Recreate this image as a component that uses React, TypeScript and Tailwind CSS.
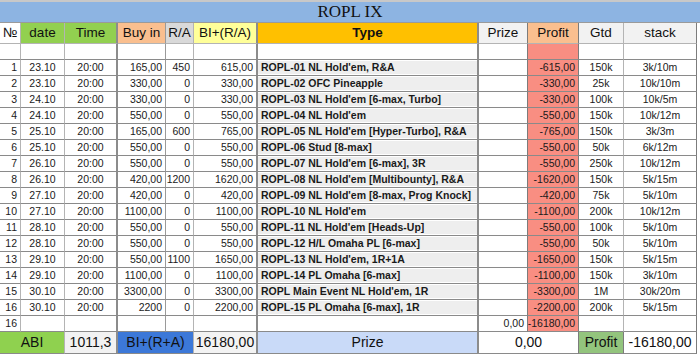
import React from "react"

const grid = "grid grid-cols-[21px_44px_53px_48px_28px_64px_221px_49px_51px_45px_73px]"

// right border of each column, as the sheet draws it
const rb = [
  "border-r border-r-[#b4b4b4]",
  "border-r border-r-[#b4b4b4]",
  "border-r-2 border-r-[#8c8c8c]",
  "border-r border-r-[#9a9a9a]",
  "border-r border-r-[#b4b4b4]",
  "border-r-2 border-r-[#8c8c8c]",
  "border-r-2 border-r-[#8c8c8c]",
  "border-r border-r-[#7c7c7c]",
  "border-r border-r-[#7c7c7c]",
  "border-r border-r-[#b4b4b4]",
  "border-r border-r-[#7c7c7c]",
]

const align = [
  "justify-end",
  "justify-center",
  "justify-center",
  "justify-end",
  "justify-end",
  "justify-end",
  "justify-start",
  "justify-end",
  "justify-end",
  "justify-center",
  "justify-center",
]

const rows: string[][] = [
  ["1", "23.10", "20:00", "165,00", "450", "615,00", "ROPL-01 NL Hold'em, R&A", "", "-615,00", "150k", "3k/10m"],
  ["2", "23.10", "20:00", "330,00", "0", "330,00", "ROPL-02 OFC Pineapple", "", "-330,00", "25k", "10k/10m"],
  ["3", "24.10", "20:00", "330,00", "0", "330,00", "ROPL-03 NL Hold'em [6-max, Turbo]", "", "-330,00", "100k", "10k/5m"],
  ["4", "24.10", "20:00", "550,00", "0", "550,00", "ROPL-04 NL Hold'em", "", "-550,00", "150k", "10k/12m"],
  ["5", "25.10", "20:00", "165,00", "600", "765,00", "ROPL-05 NL Hold'em [Hyper-Turbo], R&A", "", "-765,00", "150k", "3k/3m"],
  ["6", "25.10", "20:00", "550,00", "0", "550,00", "ROPL-06 Stud [8-max]", "", "-550,00", "50k", "6k/12m"],
  ["7", "26.10", "20:00", "550,00", "0", "550,00", "ROPL-07 NL Hold'em [6-max], 3R", "", "-550,00", "250k", "10k/12m"],
  ["8", "26.10", "20:00", "420,00", "1200", "1620,00", "ROPL-08 NL Hold'em [Multibounty], R&A", "", "-1620,00", "150k", "5k/15m"],
  ["9", "27.10", "20:00", "420,00", "0", "420,00", "ROPL-09 NL Hold'em [8-max, Prog Knock]", "", "-420,00", "75k", "5k/10m"],
  ["10", "27.10", "20:00", "1100,00", "0", "1100,00", "ROPL-10 NL Hold'em", "", "-1100,00", "200k", "10k/12m"],
  ["11", "28.10", "20:00", "550,00", "0", "550,00", "ROPL-11 NL Hold'em [Heads-Up]", "", "-550,00", "100k", "5k/10m"],
  ["12", "28.10", "20:00", "550,00", "0", "550,00", "ROPL-12 H/L Omaha PL [6-max]", "", "-550,00", "50k", "5k/10m"],
  ["13", "29.10", "20:00", "550,00", "1100", "1650,00", "ROPL-13 NL Hold'em, 1R+1A", "", "-1650,00", "150k", "5k/15m"],
  ["14", "29.10", "20:00", "1100,00", "0", "1100,00", "ROPL-14 PL Omaha [6-max]", "", "-1100,00", "150k", "3k/10m"],
  ["15", "30.10", "20:00", "3300,00", "0", "3300,00", "ROPL Main Event NL Hold'em, 1R", "", "-3300,00", "1M", "30k/20m"],
  ["16", "30.10", "20:00", "2200", "0", "2200,00", "ROPL-15 PL Omaha [6-max], 1R", "", "-2200,00", "200k", "5k/15m"],
]

function Row({ cells, typeBg }: { cells: string[]; typeBg: boolean }) {
  return (
    <div className={`${grid} h-[16px] text-[10.5px] leading-none text-[#1a1a1a]`}>
      {cells.map((c, i) => (
        <div
          key={i}
          className={`flex items-center overflow-hidden whitespace-nowrap border-b border-b-[#8a8a8a] px-[3px] ${rb[i]} ${align[i]} ${
            i === 8 ? "bg-[#f98e82]" : ""
          } ${i === 6 ? "py-[1px] font-bold" : ""}`}
        >
          {i === 6 && typeBg ? (
            <span className="-mx-[3px] flex h-full w-[calc(100%+6px)] items-center bg-[#eeeeee] px-[3px]">{c}</span>
          ) : (
            c
          )}
        </div>
      ))}
    </div>
  )
}

export default function App() {
  const head = [
    { t: "№", bg: "bg-white", j: "justify-start" },
    { t: "date", bg: "bg-[#92d050]", j: "justify-center" },
    { t: "Time", bg: "bg-[#92d050]", j: "justify-center" },
    { t: "Buy in", bg: "bg-[#fabf8f]", j: "justify-center" },
    { t: "R/A", bg: "bg-[#d9d9d9]", j: "justify-center" },
    { t: "BI+(R/A)", bg: "bg-[#ffff99]", j: "justify-center" },
    { t: "Type", bg: "bg-[#ffc000] font-bold", j: "justify-center" },
    { t: "Prize", bg: "bg-[#f2f2f2]", j: "justify-center" },
    { t: "Profit", bg: "bg-[#fabf8f]", j: "justify-center" },
    { t: "Gtd", bg: "bg-[#f2f2f2]", j: "justify-center" },
    { t: "stack", bg: "bg-[#f2f2f2]", j: "justify-center" },
  ]

  return (
    <div className="h-[354px] w-[700px] overflow-hidden bg-white font-['Liberation_Sans',Arial,sans-serif]">
      <div className="flex h-[23px] items-center justify-center border-t-2 border-b border-t-[#c8c8c8] border-b-[#9a9a9a] bg-[#8db4e2] font-['Liberation_Serif','Times_New_Roman',serif] text-[17px] text-[#111]">
        ROPL IX
      </div>

      <div className={`${grid} h-[21px] text-[13.5px] text-[#111]`}>
        {head.map((h, i) => (
          <div key={i} className={`flex items-center px-[3px] border-b border-b-[#b4b4b4] ${rb[i]} ${h.bg} ${h.j}`}>
            {h.t}
          </div>
        ))}
      </div>

      <Row cells={["", "", "", "", "", "", "", "", "", "", ""]} typeBg={false} />
      {rows.map((r, i) => (
        <Row key={i} cells={r} typeBg={true} />
      ))}
      <Row cells={["16", "", "", "", "", "", "", "0,00", "-16180,00", "", ""]} typeBg={false} />

      <div className={`${grid} h-[21px] text-[14px] text-[#111]`}>
        <div className="col-span-2 flex items-center justify-center border-r border-b border-r-[#b4b4b4] border-b-[#8a8a8a] bg-[#8fd14f]">ABI</div>
        <div className="flex items-center justify-center border-r-2 border-b border-r-[#8c8c8c] border-b-[#8a8a8a] bg-[#f2f2f2]">1011,3</div>
        <div className="col-span-2 flex items-center justify-center border-r border-b border-r-[#b4b4b4] border-b-[#8a8a8a] bg-[#3c78d8]">BI+(R+A)</div>
        <div className="flex items-center justify-center border-r-2 border-b border-r-[#8c8c8c] border-b-[#8a8a8a] bg-[#f3f3f3]">16180,00</div>
        <div className="flex items-center justify-center border-r-2 border-b border-r-[#8c8c8c] border-b-[#8a8a8a] bg-[#c9daf8]">Prize</div>
        <div className="col-span-2 flex items-center justify-center border-r border-b border-r-[#7c7c7c] border-b-[#8a8a8a] bg-white">0,00</div>
        <div className="flex items-center justify-center border-r border-b border-r-[#7c7c7c] border-b-[#8a8a8a] bg-[#93c47d]">Profit</div>
        <div className="flex items-center justify-center border-r border-b border-r-[#7c7c7c] border-b-[#8a8a8a] bg-white">-16180,00</div>
      </div>
    </div>
  )
}
